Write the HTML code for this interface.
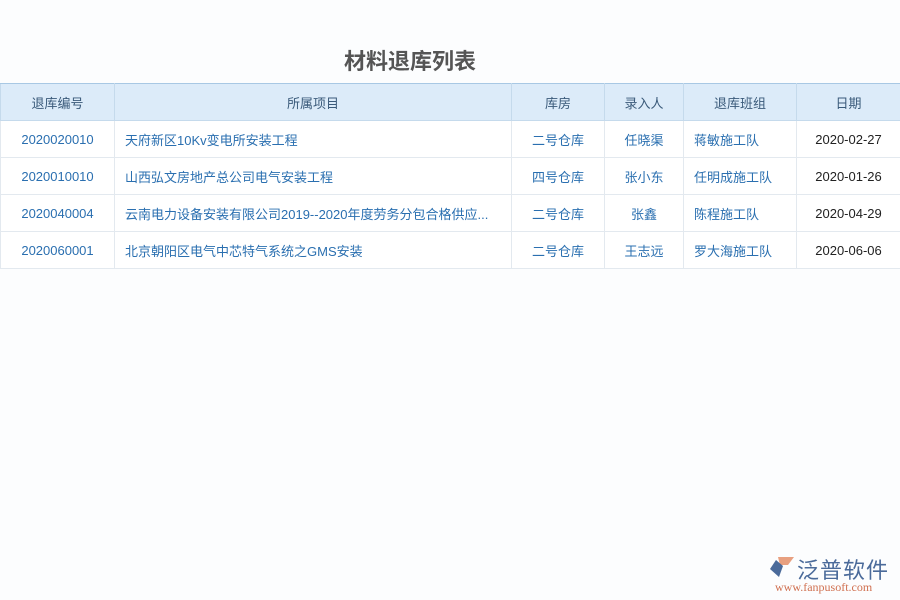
<!DOCTYPE html><html><head><meta charset="utf-8"><style>
body{margin:0;width:900px;height:600px;background:#fcfdfe;font-family:"Liberation Sans","Noto Sans CJK SC",sans-serif;position:relative;overflow:hidden}
h1{position:absolute;top:44px;left:0;width:820px;margin:0;text-align:center;font-size:22px;color:#555;font-weight:bold}
table{position:absolute;top:83px;left:0;border-collapse:collapse;width:900px;table-layout:fixed;font-size:13px}
th,td{padding:0;box-sizing:border-box}
th{background:#dcebf9;color:#3a5a7a;font-weight:normal;height:37px;border:1px solid #c5daec;border-top:1px solid #a8c8e4}
td{height:37px;border:1px solid #e3e9ef;color:#2a6fb0;text-align:center;background:#fff;white-space:nowrap;overflow:hidden;text-overflow:ellipsis}
td.l{text-align:left;padding-left:10px}
td.d{color:#222}
</style></head><body>
<h1>材料退库列表</h1>
<table>
<colgroup><col style="width:114px"><col style="width:397px"><col style="width:93px"><col style="width:79px"><col style="width:113px"><col style="width:104px"></colgroup>
<tr><th>退库编号</th><th>所属项目</th><th>库房</th><th>录入人</th><th>退库班组</th><th>日期</th></tr>
<tr><td>2020020010</td><td class="l">天府新区10Kv变电所安装工程</td><td>二号仓库</td><td>任晓渠</td><td class="l">蒋敏施工队</td><td class="d">2020-02-27</td></tr>
<tr><td>2020010010</td><td class="l">山西弘文房地产总公司电气安装工程</td><td>四号仓库</td><td>张小东</td><td class="l">任明成施工队</td><td class="d">2020-01-26</td></tr>
<tr><td>2020040004</td><td class="l">云南电力设备安装有限公司2019--2020年度劳务分包合格供应...</td><td>二号仓库</td><td>张鑫</td><td class="l">陈程施工队</td><td class="d">2020-04-29</td></tr>
<tr><td>2020060001</td><td class="l">北京朝阳区电气中芯特气系统之GMS安装</td><td>二号仓库</td><td>王志远</td><td class="l">罗大海施工队</td><td class="d">2020-06-06</td></tr>
</table>
<svg style="position:absolute;left:768px;top:556px" width="28" height="24"><path d="M10 1 L26 1 L20 9 L12 9 Z" fill="#e8a080"/><path d="M8 4 L15 10 L11 21 L2 13 Z" fill="#4a6a9a"/></svg>
<div style="position:absolute;left:797px;top:553px;font-size:22px;color:#4a6a9a;letter-spacing:1px">泛普软件</div>
<div style="position:absolute;left:775px;top:580px;font-size:12px;color:#d07050;font-family:'Liberation Serif',serif">www.fanpusoft.com</div>
</body></html>
